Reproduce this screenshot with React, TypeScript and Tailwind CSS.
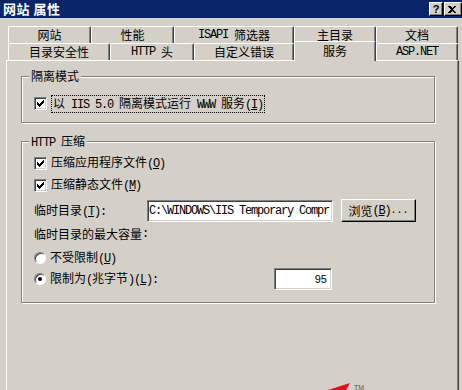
import React from "react";

// Latin text in the dialog uses the half-width (6px) glyphs of the system font
function L({ children }: { children: React.ReactNode }) {
  return (
    <span className="font-['Liberation_Mono',monospace] text-[12px] tracking-[-1.2px] whitespace-pre">
      {children}
    </span>
  );
}

// mnemonic key, e.g. (O)
function K({ c }: { c: string }) {
  return (
    <L>
      (<u className="underline-offset-[1px]">{c}</u>)
    </L>
  );
}

function Check() {
  return (
    <span className="w-[13px] h-[13px] shrink-0 bg-white border border-t-[#808080] border-l-[#808080] border-b-white border-r-white shadow-[inset_1px_1px_0_#404040,inset_-1px_-1px_0_#d4d0c8] flex items-center justify-center">
      <svg width="7" height="7" viewBox="0 0 7 7" shapeRendering="crispEdges">
        <path d="M0 2L2 4L6 0H7V2L2 7L0 5Z" fill="#000" />
      </svg>
    </span>
  );
}

function Radio({ on }: { on?: boolean }) {
  return (
    <span className="w-[12px] h-[12px] shrink-0 rounded-full bg-white border border-t-[#808080] border-l-[#808080] border-b-white border-r-white shadow-[inset_1px_1px_0_#404040] flex items-center justify-center">
      {on && <span className="w-[4px] h-[4px] rounded-full bg-black" />}
    </span>
  );
}

function Group({
  label,
  className,
  children,
}: {
  label: React.ReactNode;
  className: string;
  children: React.ReactNode;
}) {
  return (
    <div
      className={`relative border border-[#808080] shadow-[inset_1px_1px_0_#fff,1px_1px_0_#fff] ${className}`}
    >
      <span className="absolute -top-[8px] left-[7px] px-[2px] bg-[#d4d0c8] leading-[14px] whitespace-nowrap">
        {label}
      </span>
      {children}
    </div>
  );
}

function Tab({
  w,
  active,
  children,
}: {
  w: string;
  active?: boolean;
  children: React.ReactNode;
}) {
  return (
    <div
      className={`${w} ${
        active ? "h-[20px] -mt-[2px] relative z-10 pb-[2px]" : "h-[17px]"
      } shrink-0 bg-[#d4d0c8] border-l border-t border-white border-r border-r-[#404040] shadow-[inset_-1px_0_0_#808080] rounded-tl-[2px] rounded-tr-[2px] flex items-center justify-center whitespace-nowrap leading-[14px]`}
    >
      {children}
    </div>
  );
}

function Field({
  w,
  right,
  children,
}: {
  w: string;
  right?: boolean;
  children: React.ReactNode;
}) {
  return (
    <div
      className={`${w} h-[22px] shrink-0 bg-white border border-t-[#808080] border-l-[#808080] border-b-white border-r-white shadow-[inset_1px_1px_0_#404040,inset_-1px_-1px_0_#d4d0c8] overflow-hidden whitespace-nowrap flex items-center ${
        right ? "justify-end pr-[4px]" : "pl-[1px]"
      }`}
    >
      {children}
    </div>
  );
}

export default function App() {
  return (
    <div className="w-[462px] h-[390px] overflow-hidden relative bg-[#d4d0c8] text-black text-[12px] leading-[14px] font-['Noto_Sans_CJK_SC',sans-serif]">
      {/* caption */}
      <div className="h-[18px] bg-[#0a246a] flex items-center pl-[3px]">
        <span className="text-white font-bold text-[13px] tracking-[0.5px]">网站 属性</span>
        <div className="ml-auto flex gap-[1px] self-start mt-[2px]">
          <div className="w-[14px] h-[14px] bg-[#d4d0c8] border border-t-white border-l-white border-b-black border-r-black shadow-[inset_-1px_-1px_0_#808080] flex items-center justify-center font-['Liberation_Sans',sans-serif] font-bold text-[11px] leading-none">
            ?
          </div>
          <div className="w-[18px] h-[14px] bg-[#d4d0c8] border border-t-white border-l-white border-b-black border-r-black shadow-[inset_-1px_-1px_0_#808080] flex items-center pl-[3px]">
            <svg width="8" height="7" viewBox="0 0 8 7" shapeRendering="crispEdges">
              <path
                d="M0 0H2L4 2L6 0H8L5 3.5L8 7H6L4 5L2 7H0L3 3.5Z"
                fill="#000"
              />
            </svg>
          </div>
        </div>
      </div>

      {/* tabs */}
      <div className="pt-[8px] pl-[8px]">
        <div className="flex items-start h-[17px]">
          <Tab w="w-[83px]">网站</Tab>
          <Tab w="w-[83px]">性能</Tab>
          <Tab w="w-[120px]">
            <L>ISAPI </L>筛选器
          </Tab>
          <Tab w="w-[82px]">主目录</Tab>
          <Tab w="w-[82px]">文档</Tab>
        </div>
        <div className="flex items-start h-[17px]">
          <Tab w="w-[102px]">目录安全性</Tab>
          <Tab w="w-[84px]">
            <L>HTTP </L>头
          </Tab>
          <Tab w="w-[100px]">自定义错误</Tab>
          <Tab w="w-[82px]" active>
            服务
          </Tab>
          <Tab w="w-[82px]">
            <L>ASP.NET</L>
          </Tab>
        </div>
      </div>

      {/* page */}
      <div className="ml-[6px] w-[453px] h-[330px] border-l border-t border-white border-r border-r-[#404040] shadow-[inset_-1px_0_0_#808080] pl-[14px] pt-[15px]">
        <Group label="隔离模式" className="w-[414px] h-[47px]">
          <div className="pl-[12px] pt-[18px] flex items-center gap-[4px] h-[35px]">
            <Check />
            <span className="border border-dotted border-black px-[1px] leading-[14px] whitespace-nowrap">
              以<L> IIS 5.0 </L>隔离模式运行<L> WWW </L>服务
              <K c="I" />
            </span>
          </div>
        </Group>

        <Group
          label={
            <>
              <L>HTTP </L>压缩
            </>
          }
          className="w-[414px] h-[162px] mt-[18px]"
        >
          <div className="pl-[12px] pt-[12px] flex flex-col">
            <div className="h-[18px] flex items-center gap-[4px]">
              <Check />
              <span>
                压缩应用程序文件
                <K c="O" />
              </span>
            </div>
            <div className="h-[18px] mt-[4px] flex items-center gap-[4px]">
              <Check />
              <span>
                压缩静态文件
                <K c="M" />
              </span>
            </div>
            <div className="h-[23px] mt-[5px] flex items-center">
              <span className="w-[113px] shrink-0">
                临时目录
                <K c="T" />
                <L>:</L>
              </span>
              <Field w="w-[186px]">
                <L>{"C:\\WINDOWS\\IIS Temporary Compr"}</L>
              </Field>
              <button className="ml-[8px] w-[75px] h-[23px] shrink-0 bg-[#d4d0c8] border border-t-white border-l-white border-b-black border-r-black shadow-[inset_-1px_-1px_0_#808080] flex items-center justify-center whitespace-nowrap">
                浏览
                <K c="B" />
                <span className="font-['Liberation_Mono',monospace] text-[10px]">...</span>
              </button>
            </div>
            <div className="h-[18px] mt-[3px] flex items-center">
              临时目录的最大容量<L>:</L>
            </div>
            <div className="h-[18px] mt-[6px] flex items-center gap-[4px]">
              <Radio />
              <span>
                不受限制
                <K c="U" />
              </span>
            </div>
            <div className="h-[22px] mt-[1px] flex items-center gap-[4px]">
              <Radio on />
              <span className="w-[220px] shrink-0 whitespace-nowrap">
                限制为<L>(</L>兆字节<L>)</L>
                <K c="L" />
                <L>:</L>
              </span>
              <Field w="w-[58px]" right>
                <span className="font-['Liberation_Sans',sans-serif] text-[11px]">
                  95
                </span>
              </Field>
            </div>
          </div>
        </Group>
      </div>

      {/* stray red arrow from the screenshot's edge */}
      <svg
        className="absolute left-[326px] top-[381px]"
        width="40"
        height="9"
        viewBox="0 0 40 9"
      >
        <polygon points="2,9 24,2 20,9" fill="#e0101a" />
        <text x="28" y="9" fontSize="7" fill="#555" fontFamily="Liberation Sans">
          TM
        </text>
      </svg>
    </div>
  );
}
